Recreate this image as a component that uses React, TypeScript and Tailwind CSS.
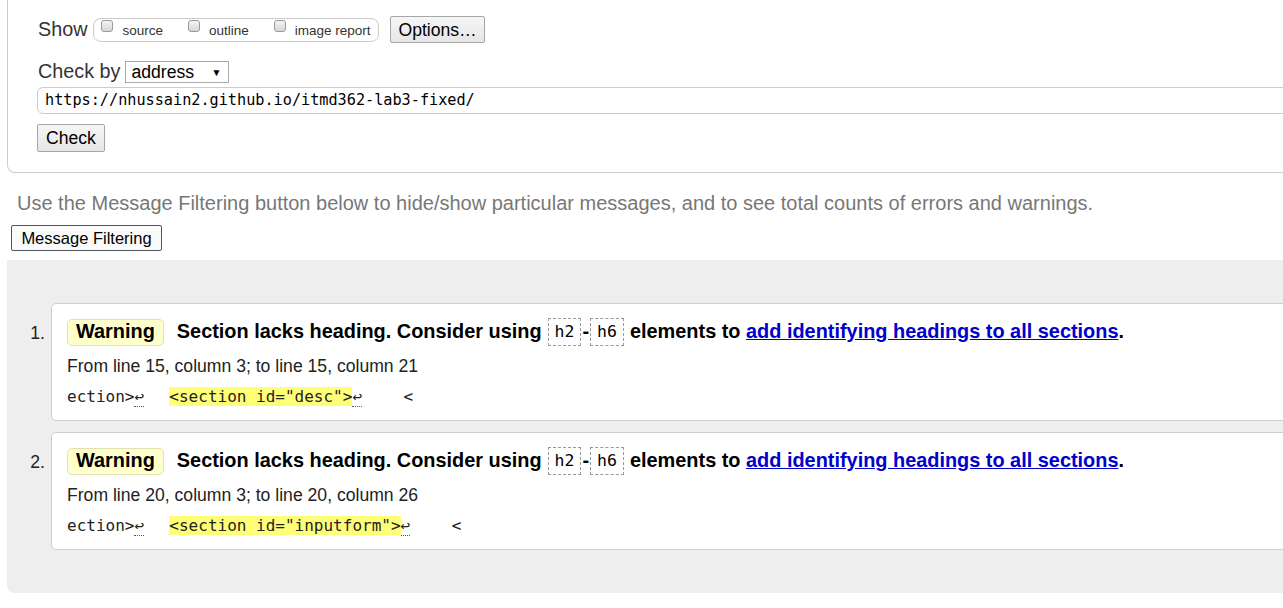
import React from "react";

const mono = "font-['DejaVu_Sans_Mono',monospace]";

const Checkbox = ({ label }: { label: string }) => (
  <span className="flex items-start gap-[9px]">
    <span className="mt-[1px] block w-[12px] h-[12px] rounded-[3px] border border-[#9a9a9a] bg-gradient-to-b from-[#f4f4f4] to-[#d6d6d6]" />
    <span className="text-[13.5px] leading-[18px] mt-[3px]">{label}</span>
  </span>
);

const Warning = ({ num, from, id }: { num: number; from: string; id: string }) => (
  <div className="flex">
    <div className="w-[44px] shrink-0 pt-[17px] pr-[6px] text-right text-[17.6px] text-[#222]">{num}.</div>
    <div className="flex-1 h-[118px] bg-white border border-[#cfcfcf] rounded-[5px] pl-[15px] pt-[14px]">
      <div className="flex items-center h-[28px] text-[19.9px] font-bold text-black whitespace-nowrap">
        <span className="h-[27px] px-[8px] flex items-center rounded-[5px] border border-[#e2e2b0] bg-[#ffffcc]">Warning</span>
        <span className="ml-[13px]">Section lacks heading. Consider using</span>
        <code className={`${mono} font-normal text-[16.5px] ml-[6px] h-[28px] px-[6px] flex items-center border border-dashed border-[#999]`}>h2</code>
        <span className="mx-[1px]">-</span>
        <code className={`${mono} font-normal text-[16.5px] h-[28px] px-[6px] flex items-center border border-dashed border-[#999]`}>h6</code>
        <span className="ml-[6px]">elements to&nbsp;</span>
        <a href="#" className="text-[#0000cc] underline">add identifying headings to all sections</a>
        <span>.</span>
      </div>
      <div className="mt-[9px] text-[17.6px] text-[#222] leading-[22px]">{from}</div>
      <div className={`${mono} mt-[9px] text-[16px] leading-[21px] text-[#222] whitespace-pre`}>
        ection&gt;<span className="border-b border-dotted border-[#555]">↩</span>{"  "}
        <span className="ml-[6px] bg-[#ffff77]">&lt;section id="{id}"&gt;</span>
        <span className="border-b border-dotted border-[#555]">↩</span>
        <span className="ml-[3px]">{"    "}&lt;</span>
      </div>
    </div>
  </div>
);

export default function App() {
  return (
    <div className="w-full h-[608px] overflow-hidden bg-white font-['Liberation_Sans',Arial,sans-serif] text-[#333]">
      <div className="w-[1320px]">
        {/* Check form panel */}
        <div className="ml-[7px] border-l border-b border-[#cccccc] rounded-bl-[8px] pl-[29px] pt-[16px] pb-[20px]">
          <div className="flex items-center h-[27px]">
            <span className="text-[19.8px] ml-[1px]">Show</span>
            <div className="ml-[6px] h-[24px] w-[286px] rounded-[8px] border border-[#cccccc] flex items-start pl-[7px] gap-[25px] text-[#333]">
              <Checkbox label="source" />
              <Checkbox label="outline" />
              <Checkbox label="image report" />
            </div>
            <button className="ml-[11px] h-[27px] px-[7px] border border-[#a6a6a6] rounded-[2px] bg-gradient-to-b from-[#f6f6f6] to-[#e6e6e6] text-[17.6px] text-black">
              Options…
            </button>
          </div>
          <div className="flex items-center mt-[18px] h-[22px]">
            <span className="text-[19.8px] ml-[1px]">Check by</span>
            <div className="ml-[5px] w-[104px] h-[22px] border border-[#a9a9a9] flex items-center justify-between pl-[5px] pr-[7px] text-[17.6px] text-black bg-white">
              <span>address</span>
              <span className="text-[10px]">▼</span>
            </div>
          </div>
          <div className={`${mono} mt-[4px] h-[27px] border border-[#cccccc] rounded-l-[6px] flex items-center pl-[7px] text-[15.2px] text-black`}>
            https://nhussain2.github.io/itmd362-lab3-fixed/
          </div>
          <button className="mt-[10px] h-[28px] px-[8px] border border-[#a6a6a6] rounded-[2px] bg-gradient-to-b from-[#f6f6f6] to-[#e6e6e6] text-[17.6px] text-black">
            Check
          </button>
        </div>

        <p className="ml-[17px] mt-[18px] text-[20px] leading-[24px] text-[#777]">
          Use the Message Filtering button below to hide/show particular messages, and to see total counts of errors and warnings.
        </p>
        <button className="ml-[11px] mt-[10px] h-[26px] w-[151px] border border-[#4e5661] rounded-[2px] bg-[#fafafa] text-[16.5px] text-black">
          Message Filtering
        </button>

        {/* Results */}
        <div className="ml-[7px] mt-[9px] h-[333px] bg-[#eeeeee] rounded-bl-[8px] pt-[43px] flex flex-col gap-[11px]">
          <Warning num={1} from="From line 15, column 3; to line 15, column 21" id="desc" />
          <Warning num={2} from="From line 20, column 3; to line 20, column 26" id="inputform" />
        </div>
      </div>
    </div>
  );
}
